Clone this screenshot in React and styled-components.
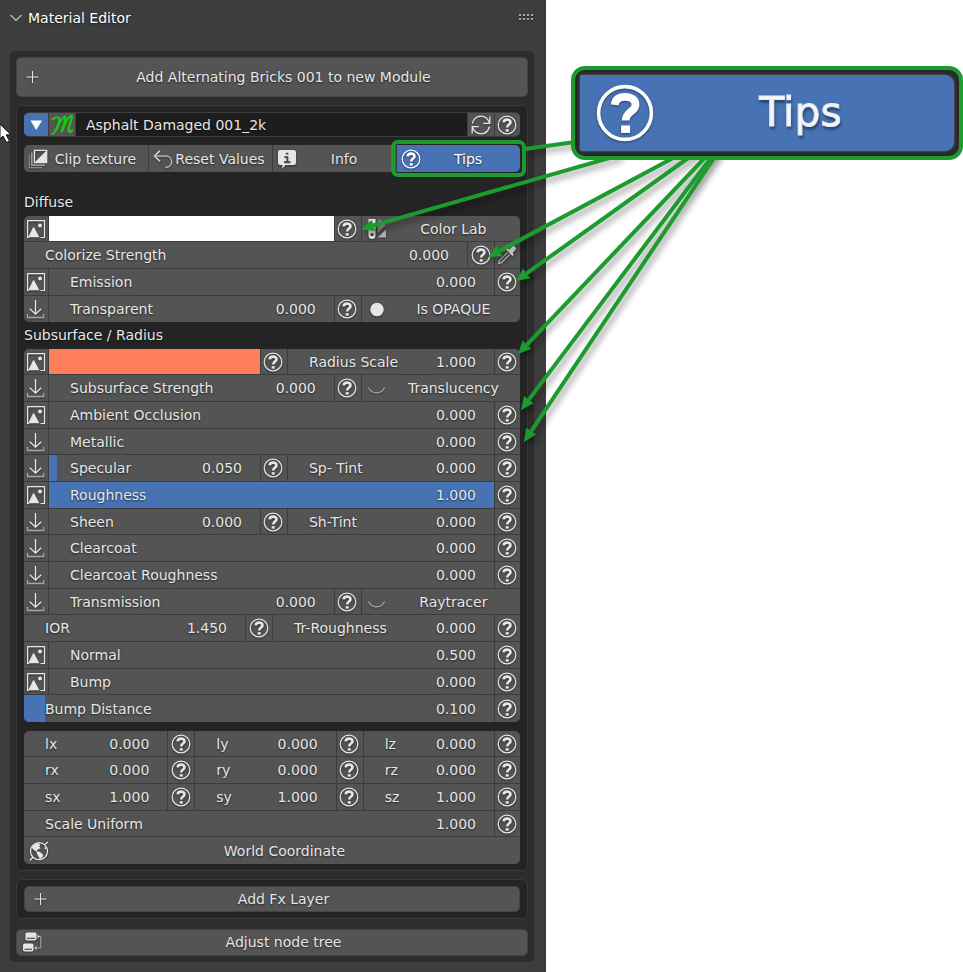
import React from "react";
import styled, { createGlobalStyle, css } from "styled-components";

const GREEN = "#1c9c2e";
const BLUE = "#4772b3";
const CELL = "#545454";
const LINE = "#3c3c3c";
const INK = "#e6e6e6";

const GlobalStyle = createGlobalStyle`
  * { box-sizing: border-box; }
  body {
    margin: 0;
    background: #fff;
    font-family: "DejaVu Sans", sans-serif;
    font-size: 14px;
    color: ${INK};
  }
  button, input {
    font: inherit;
    color: inherit;
    text-shadow: inherit;
    border: 0;
    margin: 0;
    padding: 0;
    background: none;
    min-width: 0;
  }
`;

const Page = styled.div`
  position: relative;
  display: grid;
  grid-template-columns: minmax(0, 546fr) minmax(0, 417fr);
  min-height: 100vh;
`;

const Panel = styled.main`
  background: #3d3d3d;
  padding: 0 12px 10px 10px;
  text-shadow: 0 1px 2px rgba(0, 0, 0, 0.6);
`;

const PanelHeader = styled.header`
  display: flex;
  align-items: center;
  justify-content: space-between;
  height: 35px;
  margin-bottom: 16px;
`;

const PanelTitle = styled.button`
  display: flex;
  align-items: center;
  gap: 6px;
  color: #fff;
`;

const Outer = styled.div`
  background: #2d2d2d;
  border-radius: 5px;
  padding: 6px;
`;

const Box = styled.section`
  background: #242424;
  border: 1px solid #3a3a3a;
  border-radius: 6px;
  padding: 6px 7px;
  margin-top: 8px;
`;

const Action = styled.button`
  position: relative;
  display: flex;
  align-items: center;
  width: 100%;
  height: ${(p) => p.$height || 26}px;
  margin-top: ${(p) => p.$gap || 0}px;
  padding: 0 2px 1px 5px;
  background: ${CELL};
  border: 1px solid #444;
  border-radius: 5px;
  overflow: hidden;
`;

const Caption = styled.span`
  flex: 1;
  text-align: center;
  white-space: nowrap;
`;

const NameRow = styled.div`
  display: flex;
  height: 25px;
  border-radius: 5px;
  overflow: hidden;
  background: #1d1d1d;
  border: 1px solid ${LINE};
  border-width: 1px 0;
`;

const NameInput = styled.input`
  flex: 1;
  padding-left: 10px;
  border-left: 1px solid ${LINE};
`;

const IconButton = styled.button`
  flex: none;
  display: flex;
  align-items: center;
  justify-content: center;
  width: ${(p) => p.$width || 26}px;
  padding-right: 1px;
  background: ${(p) => (p.$active ? BLUE : CELL)};
  border-left: ${(p) => (p.$first ? "0" : `1px solid ${LINE}`)};
`;

const Toolbar = styled.div`
  display: grid;
  grid-template-columns: repeat(4, minmax(0, 1fr));
  height: 27px;
  margin-top: 8px;
`;

const Tool = styled.button`
  position: relative;
  display: flex;
  align-items: center;
  padding: 0 5px 0 4px;
  background: ${(p) => (p.$active ? BLUE : CELL)};
  border-left: 1px solid ${LINE};
  &:first-child { border-left: 0; border-radius: 5px 0 0 5px; }
  &:last-child { border-radius: 0 5px 5px 0; }
  ${(p) =>
    p.$active &&
    css`
      color: #fff;
      &::after {
        content: "";
        position: absolute;
        inset: -5px -6px;
        border: 4px solid ${GREEN};
        border-radius: 7px;
      }
    `}
`;

const SectionTitle = styled.h2`
  margin: ${(p) => (p.$first ? "17px" : "0")} 0 0;
  font-size: 14px;
  font-weight: 400;
  line-height: 27px;
`;

const Group = styled.div`
  margin-top: ${(p) => p.$gap || 0}px;
  border-radius: 5px;
  overflow: hidden;
`;

const Row = styled.div`
  display: flex;
  height: 27px;
  border-bottom: 1px solid ${LINE};
  &:nth-child(3n + 1) { height: 26px; }
  &:last-child { border-bottom: 0; }
`;

const FieldBox = styled.label`
  flex: ${(p) => p.$grow || 1} 1 0;
  min-width: 0;
  display: flex;
  align-items: center;
  border-left: ${(p) => (p.$first ? "0" : `1px solid ${LINE}`)};
  background: linear-gradient(${BLUE}, ${BLUE}) no-repeat 0 0 /
    ${(p) => p.$fill || 0}% 100% ${CELL};
  white-space: nowrap;
`;

const FieldName = styled.span`
  margin-left: 21px;
`;

const Value = styled.input`
  flex: 1;
  width: 0;
  && { margin-right: 18px; }
  text-align: right;
`;

const Swatch = styled.button`
  flex: ${(p) => p.$grow} 1 0;
  background: ${(p) => p.$color};
  border-left: 1px solid ${LINE};
`;

const Toggle = styled.button`
  flex: ${(p) => p.$grow || 1} 1 0;
  display: flex;
  align-items: center;
  background: ${CELL};
  border-left: ${(p) => (p.$first ? "0" : `1px solid ${LINE}`)};
  > svg { margin-left: 5px; }
`;

const Aside = styled.aside`
  padding: 66px 0 0 25px;
`;

const Callout = styled.button`
  position: relative;
  z-index: 2;
  display: block;
  width: 100%;
  padding: 5px;
  background: #292929;
  border: 4px solid ${GREEN};
  border-radius: 14px;
`;

const CalloutFace = styled.span`
  display: flex;
  align-items: center;
  height: 76px;
  padding-left: 15px;
  background: ${BLUE};
  border-radius: 2px 9px 9px 2px;
  box-shadow: 0 0 2px 1px #4a4a4a;
  color: #f4f6fa;
  font-size: 41px;
  text-shadow: 1px 3px 3px rgba(0, 0, 0, 0.5);
`;

const CalloutText = styled.span`
  flex: 1;
  padding: 0 8px 2px 0;
  text-align: center;
  -webkit-text-stroke: 1px #e4e9f2;
  filter: blur(0.6px);
`;

const Overlay = styled.svg`
  position: absolute;
  z-index: 1;
  top: 0;
  left: 0;
  width: 100%;
  height: 972px;
  pointer-events: none;
`;

const Glyph = styled.svg`
  flex: none;
  display: block;
  filter: ${(p) => (p.$plain ? "none" : "drop-shadow(0 1px 1px rgba(0, 0, 0, 0.4))")};
`;

function Icon({ size = 20, plain, children }) {
  return (
    <Glyph $plain={plain} width={size} height={size} viewBox="0 0 20 20" fill="none" stroke={INK} strokeWidth="1.3" aria-hidden="true">
      {children}
    </Glyph>
  );
}

const HelpIcon = ({ size, bright }) => (
  <Icon size={size}>
    <g stroke={bright ? "#fff" : INK}>
      <circle cx="10" cy="10" r="8.8" strokeWidth="1.2" />
      <path d="M6.6 7.3C6.8 5.300 8.200 4.600 10 4.600c2.100 0 3.500 1 3.500 2.700 0 2.200-3.300 2.300-3.300 5.200" strokeWidth="2.600" />
      <path d="M8.700 15.400h3" strokeWidth="2.500" />
    </g>
  </Icon>
);

const ImageIcon = () => (
  <Icon>
    <path d="M3 18.3H1.6V1.6h16.9v16.9h-4" strokeWidth="1.2" />
    <path d="M2.2 18.3 7 8.6q.6-.8 1.2 0l5.2 9.7z" fill={INK} stroke="none" />
    <circle cx="14" cy="6.5" r="2" fill={INK} stroke="none" />
  </Icon>
);

const ImportIcon = () => (
  <Icon>
    <path d="M9.500 1v14M3.800 9.800l5.700 5.400 5.700-5.400" strokeWidth="1.300" />
    <path d="M1.500 15v3.500h16.200V15" stroke="#a8a8a8" />
  </Icon>
);

const LidIcon = () => (
  <Icon>
    <path d="M1.500 9.500C4.500 16.600 14.500 16.600 17.500 9.500" stroke="#a8a8a8" strokeWidth="1.100" />
  </Icon>
);

const DotIcon = () => (
  <Icon>
    <circle cx="10" cy="10.500" r="6.700" fill={INK} stroke="none" />
  </Icon>
);

const PlusIcon = () => (
  <Icon>
    <path d="M10.500 4v12M4.500 10h12" strokeWidth="1" />
  </Icon>
);

const ClipIcon = () => (
  <Icon>
    <path d="M1.300 6v12.700H14" stroke="#8c8c8c" strokeWidth="1.200" />
    <path d="M3.800 3.500v12.700h13" stroke="#b8b8b8" strokeWidth="1.200" />
    <path d="M6.400 1.300h12.300v12.300H6.400z" />
    <path d="M18.500 1.500v12H6.500z" fill={INK} stroke="none" />
  </Icon>
);

const UndoIcon = () => (
  <Icon>
    <path d="M7 1.700 1.300 7 7 12.300" />
    <path d="M1.300 7h11.500c3.500 0 5.800 2.500 5.800 5.600s-2.300 5.700-5.400 5.700h-.7" stroke="#b8b8b8" strokeWidth="1.400" />
  </Icon>
);

const InfoIcon = () => (
  <Icon>
    <path d="M3.300 1h13.400A2.300 2.300 0 0 1 19 3.300v10.400a2.300 2.300 0 0 1-2.300 2.300H8.500L5.200 19.800 5.500 16H3.300A2.300 2.300 0 0 1 1 13.700V3.300A2.300 2.300 0 0 1 3.300 1z" fill={INK} stroke="none" />
    <path d="M8.800 4.600h2.600M7.300 8.100h3.100v5M7 13.300h6.500" stroke="#444" strokeWidth="1.900" />
  </Icon>
);

const RefreshIcon = () => (
  <Icon>
    <path d="M1.400 8.500C2.600 4.200 6 1.200 10 1.200c3.800 0 6.500 2 8.600 6.600M18.800 1.500v6.800h-6.600M18.600 11.500c-1.200 4.300-4.600 7.300-8.600 7.300-3.800 0-6.500-2-8.600-6.600M1.200 18.500v-6.800h6.600" />
  </Icon>
);

const PaletteIcon = () => (
  <Icon>
    <g stroke="none">
      <path d="M1.500 0h7v16.500a3.500 3.500 0 0 1-7 0z" fill={INK} />
      <path d="M1.500 4.500h7v3h-7z" fill="#8a8a8a" />
      <circle cx="5" cy="15.500" r="1.500" fill="#333" />
      <path d="M10.500 2.500 13 0l6 6-8.500 8.500z" fill="#858585" />
      <path d="M10.500 18.500 19 10.500v8z" fill="#b4b4b4" />
    </g>
  </Icon>
);

const DropperIcon = () => (
  <Icon>
    <path d="m10.500 7.500-8 8-.9 3 3-.9 8-8" stroke="#b8b8b8" strokeWidth="1.400" />
    <path d="m9 4.500 1.500-1.200 2 1.200L15 1.800c2-2 5.400 1 3.300 3.200l-2.600 2.700 1 2-1.400 1.400z" fill={INK} stroke="none" />
  </Icon>
);

const WorldIcon = () => (
  <Icon>
    <circle cx="10" cy="10.200" r="8.500" strokeWidth="1.200" />
    <path d="M15.500 3.700 19 1M1 19.500l3-3.500" />
    <path d="M2.500 6.500C4 3.800 6.500 2.300 9.500 2l1.800 1.800-1 1.800 1.500 1.600-3 1.300-1.500 2-2.300-1.200zM7.500 10.300l3.200.4 3 2.600c1.300 1-.3 4.300-3 4.600-.5-2.400-3.400-4-3.200-7.600z" fill={INK} stroke="none" />
    <path d="m15.800 5 2 3.500-2.300-.7z" fill={INK} stroke="none" />
  </Icon>
);

const NodeIcon = () => (
  <Icon>
    <rect x="3.500" y="0.500" width="11" height="8" rx="1.800" fill={INK} stroke="none" />
    <path d="M5 6.300h8" stroke="#4a4a4a" strokeWidth="1.200" />
    <rect x="1" y="11.500" width="10.500" height="8" rx="1.800" fill={INK} stroke="none" />
    <path d="M2.500 17.300h7.500" stroke="#4a4a4a" strokeWidth="1.200" />
    <path d="M16.500 4.500h2.300v11.500h-4" stroke="#a0a0a0" strokeWidth="1.200" />
    <path d="m15.500 2.500 2 2-2 2zM14.500 14l-2 2 2 2z" fill={INK} stroke="none" />
  </Icon>
);

const Logo = () => (
  <Icon size={24} plain>
    <g stroke="#12d312" strokeLinecap="round">
      <path d="M2 5.600C4 3.600 6.800 3 7.600 4.200c.8 1.500-1 7-3 10.500-1 1.900-2 3-2.900 2.600" strokeWidth="1.500" />
      <path d="M4.800 14.500C7.200 9 9.800 4 12.400 3c1-.2.300 2.500-.5 5.500l-2.200 6.800" strokeWidth="1.600" />
      <path d="M9.700 15.300C12 9.500 15.300 2.700 18 2.300c1.300.2-.8 4.700-1.800 8-.8 2.700-1 5.300.2 5.500.7 0 1.500-.7 2.100-1.400" strokeWidth="1.700" />
    </g>
  </Icon>
);

const Chevron = () => (
  <Icon size={12} plain>
    <path d="m1 5 9 9 9-9" strokeWidth="1.900" stroke="#c8c8c8" />
  </Icon>
);

const Grip = () => (
  <svg width="15" height="8" viewBox="0 0 15 8" aria-hidden="true">
    {[0, 4, 8, 12].map((x) => (
      <g key={x}>
        <path d={`M${x} 1h2M${x} 5h2`} stroke="#a8a8a8" strokeWidth="2" />
        <path d={`M${x} 2.500h2M${x} 6.500h2`} stroke="#1b1b1b" strokeWidth="1" />
      </g>
    ))}
  </svg>
);

const Help = ({ topic, wide = true }) => (
  <IconButton $width={wide ? 27 : 26} aria-label={`Tip: ${topic}`}>
    <HelpIcon />
  </IconButton>
);

const Lead = ({ kind, name }) => (
  <IconButton $first $width={24} aria-label={`${name} texture`}>
    {kind === "image" ? <ImageIcon /> : <ImportIcon />}
  </IconButton>
);

const Field = ({ name, value, grow, fill, first }) => (
  <FieldBox $grow={grow} $fill={fill} $first={first}>
    <FieldName>{name}</FieldName>
    <Value defaultValue={value} inputMode="decimal" />
  </FieldBox>
);

/* One slider with its leading texture slot and its tip button. */
const Channel = ({ kind, name, value, fill }) => (
  <Row>
    {kind && <Lead kind={kind} name={name} />}
    <Field name={name} value={value} fill={fill} first={!kind} />
    <Help topic={name} wide={false} />
  </Row>
);

/* Two sliders side by side, each with a tip button. */
const Pair = ({ kind, left, right }) => (
  <Row>
    {kind && <Lead kind={kind} name={left.name} />}
    <Field {...left} grow={kind ? 212 : 1} first={!kind} />
    <Help topic={left.name} />
    <Field {...right} grow={kind ? 207 : 1} />
    <Help topic={right.name} wide={false} />
  </Row>
);

/* A slider followed by a wide switch. */
const Switched = ({ kind, name, value, icon, label }) => (
  <Row>
    <Lead kind={kind} name={name} />
    <Field name={name} value={value} grow={286} />
    <Help topic={name} />
    <Toggle $grow={159}>
      {icon}
      <Caption>{label}</Caption>
    </Toggle>
  </Row>
);

const AXES = [
  ["l", "0.000"],
  ["r", "0.000"],
  ["s", "1.000"],
];
const AXIS_COLUMNS = [
  ["x", 144],
  ["y", 141],
  ["z", 131],
];

/* Start point and tip of each arrow. */
const ARROWS = [
  [620, 155, 361, 229],
  [690, 149, 488, 257],
  [705, 146, 516, 281],
  [718, 144, 518, 354],
  [722, 143, 521, 410],
  [724, 143, 524, 442],
];

function Arrow({ points: [x1, y1, x2, y2] }) {
  const length = Math.hypot(x1 - x2, y1 - y2);
  const ux = (x1 - x2) / length;
  const uy = (y1 - y2) / length;
  const bx = x2 + ux * 13;
  const by = y2 + uy * 13;
  return (
    <g>
      <line x1={x1} y1={y1} x2={bx} y2={by} stroke={GREEN} strokeWidth="4" />
      <polygon fill={GREEN} points={`${x2},${y2} ${bx - uy * 6},${by + ux * 6} ${bx + uy * 6},${by - ux * 6}`} />
    </g>
  );
}

export default function App() {
  return (
    <Page>
      <GlobalStyle />
      <Panel>
        <PanelHeader>
          <PanelTitle aria-expanded="true">
            <Chevron />
            Material Editor
          </PanelTitle>
          <Grip />
        </PanelHeader>
        <Outer>
          <Action $height={40}>
            <PlusIcon />
            <Caption>Add Alternating Bricks 001 to new Module</Caption>
          </Action>

          <Box>
            <NameRow>
              <IconButton $first $active $width={24} aria-label="Collapse module">
                <Icon plain>
                  <path d="M4.500 5.500h11.500L10.200 15z" fill="#fff" stroke="none" />
                </Icon>
              </IconButton>
              <IconButton $width={27} aria-label="Module logo">
                <Logo />
              </IconButton>
              <NameInput aria-label="Module name" defaultValue="Asphalt Damaged 001_2k" />
              <IconButton $width={27} aria-label="Refresh">
                <RefreshIcon />
              </IconButton>
              <Help topic="Module" wide={false} />
            </NameRow>

            <Toolbar>
              <Tool>
                <ClipIcon />
                <Caption>Clip texture</Caption>
              </Tool>
              <Tool>
                <UndoIcon />
                <Caption>Reset Values</Caption>
              </Tool>
              <Tool>
                <InfoIcon />
                <Caption>Info</Caption>
              </Tool>
              <Tool $active aria-pressed="true">
                <HelpIcon bright />
                <Caption>Tips</Caption>
              </Tool>
            </Toolbar>

            <SectionTitle $first>Diffuse</SectionTitle>
            <Group>
              <Row>
                <Lead kind="image" name="Diffuse" />
                <Swatch $grow={286} $color="#ffffff" aria-label="Diffuse color" />
                <Help topic="Diffuse color" />
                <Toggle $grow={159}>
                  <PaletteIcon />
                  <Caption>Color Lab</Caption>
                </Toggle>
              </Row>
              <Row>
                <Field name="Colorize Strength" value="0.000" first />
                <Help topic="Colorize Strength" />
                <IconButton aria-label="Pick color">
                  <DropperIcon />
                </IconButton>
              </Row>
              <Channel kind="image" name="Emission" value="0.000" />
              <Switched kind="import" name="Transparent" value="0.000" icon={<DotIcon />} label="Is OPAQUE" />
            </Group>

            <SectionTitle>Subsurface / Radius</SectionTitle>
            <Group>
              <Row>
                <Lead kind="image" name="Subsurface" />
                <Swatch $grow={212} $color="#ff7f5a" aria-label="Subsurface color" />
                <Help topic="Subsurface color" />
                <Field name="Radius Scale" value="1.000" grow={207} />
                <Help topic="Radius Scale" wide={false} />
              </Row>
              <Switched kind="import" name="Subsurface Strength" value="0.000" icon={<LidIcon />} label="Translucency" />
              <Channel kind="image" name="Ambient Occlusion" value="0.000" />
              <Channel kind="import" name="Metallic" value="0.000" />
              <Pair kind="import" left={{ name: "Specular", value: "0.050", fill: 4 }} right={{ name: "Sp- Tint", value: "0.000" }} />
              <Channel kind="image" name="Roughness" value="1.000" fill={100} />
              <Pair kind="import" left={{ name: "Sheen", value: "0.000" }} right={{ name: "Sh-Tint", value: "0.000" }} />
              <Channel kind="import" name="Clearcoat" value="0.000" />
              <Channel kind="import" name="Clearcoat Roughness" value="0.000" />
              <Switched kind="import" name="Transmission" value="0.000" icon={<LidIcon />} label="Raytracer" />
              <Pair left={{ name: "IOR", value: "1.450" }} right={{ name: "Tr-Roughness", value: "0.000" }} />
              <Channel kind="image" name="Normal" value="0.500" />
              <Channel kind="image" name="Bump" value="0.000" />
              <Channel name="Bump Distance" value="0.100" fill={4.5} />
            </Group>

            <Group $gap={9}>
              {AXES.map(([letter, value]) => (
                <Row key={letter}>
                  {AXIS_COLUMNS.map(([axis, grow], i) => (
                    <React.Fragment key={axis}>
                      <Field name={letter + axis} value={value} grow={grow} first={i === 0} />
                      <Help topic={letter + axis} wide={i < 2} />
                    </React.Fragment>
                  ))}
                </Row>
              ))}
              <Channel name="Scale Uniform" value="1.000" />
              <Row>
                <Toggle $first>
                  <WorldIcon />
                  <Caption>World Coordinate</Caption>
                </Toggle>
              </Row>
            </Group>
          </Box>

          <Box>
            <Action>
              <PlusIcon />
              <Caption>Add Fx Layer</Caption>
            </Action>
          </Box>

          <Action $height={27} $gap={10}>
            <NodeIcon />
            <Caption>Adjust node tree</Caption>
          </Action>
        </Outer>
      </Panel>

      <Aside>
        <Callout>
          <CalloutFace>
            <HelpIcon size={60} bright />
            <CalloutText>Tips</CalloutText>
          </CalloutFace>
        </Callout>
      </Aside>

      <Overlay viewBox="0 0 963 972" preserveAspectRatio="none" aria-hidden="true">
        <g filter="drop-shadow(3px 4px 3px rgba(0, 0, 0, 0.4))">
          <line x1="525" y1="149" x2="575" y2="142" stroke={GREEN} strokeWidth="4" />
          {ARROWS.map((points) => (
            <Arrow key={points.join()} points={points} />
          ))}
        </g>
        <path d="M0 124v15l3-3 3.500 6.500 3-1.500-3.300-6.200H11z" fill="#fff" stroke="#111" strokeWidth="1" />
      </Overlay>
    </Page>
  );
}
